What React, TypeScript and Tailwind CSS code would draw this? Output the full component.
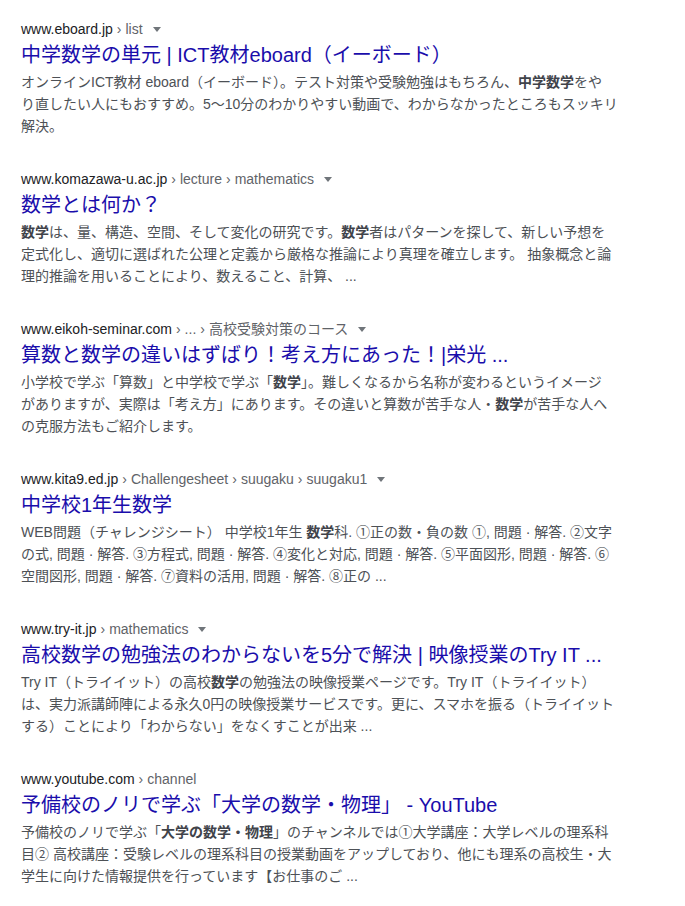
import React from "react";

type Part = string | { b: string };

type Result = {
  domain: string;
  path: string[];
  arrow: boolean;
  title: string;
  // snippet lines, broken where the reference breaks them
  lines: Part[][];
};

const results: Result[] = [
  {
    domain: "www.eboard.jp",
    path: ["list"],
    arrow: true,
    title: "中学数学の単元 | ICT教材eboard（イーボード）",
    lines: [
      ["オンラインICT教材 eboard（イーボード）。テスト対策や受験勉強はもちろん、", { b: "中学数学" }, "をや"],
      ["り直したい人にもおすすめ。5〜10分のわかりやすい動画で、わからなかったところもスッキリ"],
      ["解決。"],
    ],
  },
  {
    domain: "www.komazawa-u.ac.jp",
    path: ["lecture", "mathematics"],
    arrow: true,
    title: "数学とは何か？",
    lines: [
      [{ b: "数学" }, "は、量、構造、空間、そして変化の研究です。", { b: "数学" }, "者はパターンを探して、新しい予想を"],
      ["定式化し、適切に選ばれた公理と定義から厳格な推論により真理を確立します。 抽象概念と論"],
      ["理的推論を用いることにより、数えること、計算、 ..."],
    ],
  },
  {
    domain: "www.eikoh-seminar.com",
    path: ["...", "高校受験対策のコース"],
    arrow: true,
    title: "算数と数学の違いはずばり！考え方にあった！|栄光 ...",
    lines: [
      ["小学校で学ぶ「算数」と中学校で学ぶ「", { b: "数学" }, "」。難しくなるから名称が変わるというイメージ"],
      ["がありますが、実際は「考え方」にあります。その違いと算数が苦手な人・", { b: "数学" }, "が苦手な人へ"],
      ["の克服方法もご紹介します。"],
    ],
  },
  {
    domain: "www.kita9.ed.jp",
    path: ["Challengesheet", "suugaku", "suugaku1"],
    arrow: true,
    title: "中学校1年生数学",
    lines: [
      ["WEB問題（チャレンジシート） 中学校1年生 ", { b: "数学" }, "科. ①正の数・負の数 ①, 問題 · 解答. ②文字"],
      ["の式, 問題 · 解答. ③方程式, 問題 · 解答. ④変化と対応, 問題 · 解答. ⑤平面図形, 問題 · 解答. ⑥"],
      ["空間図形, 問題 · 解答. ⑦資料の活用, 問題 · 解答. ⑧正の ..."],
    ],
  },
  {
    domain: "www.try-it.jp",
    path: ["mathematics"],
    arrow: true,
    title: "高校数学の勉強法のわからないを5分で解決 | 映像授業のTry IT ...",
    lines: [
      ["Try IT（トライイット）の高校", { b: "数学" }, "の勉強法の映像授業ページです。Try IT（トライイット）"],
      ["は、実力派講師陣による永久0円の映像授業サービスです。更に、スマホを振る（トライイット"],
      ["する）ことにより「わからない」をなくすことが出来 ..."],
    ],
  },
  {
    domain: "www.youtube.com",
    path: ["channel"],
    arrow: false,
    title: "予備校のノリで学ぶ「大学の数学・物理」 - YouTube",
    lines: [
      ["予備校のノリで学ぶ「", { b: "大学の数学・物理" }, "」のチャンネルでは①大学講座：大学レベルの理系科"],
      ["目② 高校講座：受験レベルの理系科目の授業動画をアップしており、他にも理系の高校生・大"],
      ["学生に向けた情報提供を行っています【お仕事のご ..."],
    ],
  },
];

function ResultItem({ r }: { r: Result }) {
  return (
    <div className="mb-[33px]">
      <div className="flex items-center h-[18px] text-[14px] leading-[18px]">
        <span className="text-[#202124]">{r.domain}</span>
        {r.path.map((p, i) => (
          <span key={i} className="text-[#5f6368]">
            <span className="mx-[4px]">›</span>
            {p}
          </span>
        ))}
        {r.arrow && (
          <span className="ml-[10px] mt-[1px] w-0 h-0 border-l-[4px] border-r-[4px] border-t-[5px] border-l-transparent border-r-transparent border-t-[#70757a]" />
        )}
      </div>
      <h3 className="pt-[4px] text-[20px] leading-[26px] text-[#1a0dab] whitespace-nowrap">
        {r.title}
      </h3>
      <div className="mt-[3px] text-[14px] leading-[22px] text-[#4d5156]">
        {r.lines.map((line, li) => (
          <div key={li} className="h-[22px] whitespace-nowrap">
            {line.map((s, i) =>
              typeof s === "string" ? (
                <span key={i}>{s}</span>
              ) : (
                <b key={i} className="font-bold text-[#40434a]">
                  {s.b}
                </b>
              )
            )}
          </div>
        ))}
      </div>
    </div>
  );
}

export default function App() {
  return (
    <div
      className="min-h-screen bg-white pt-[20px] pl-[21px]"
      style={{ fontFamily: '"Liberation Sans", Arial, "Noto Sans CJK JP", sans-serif' }}
    >
      <div className="w-[600px]">
        {results.map((r, i) => (
          <ResultItem key={i} r={r} />
        ))}
      </div>
    </div>
  );
}
